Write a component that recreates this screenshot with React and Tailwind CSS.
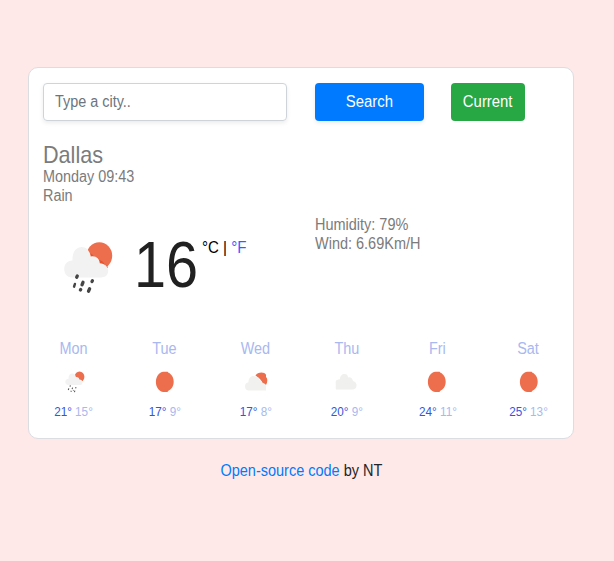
const RED = "#ec6e4c";
const CLOUD = "#f2f2f2";

function Sun({ className }) {
  return (
    <svg className={className} viewBox="0 0 20 22">
      <path d="M8.500.7h4.200l.4.900c3.300 1.300 5.600 5 5.600 9.200s-2.300 7.900-5.600 9.200l-.6 1H8.500C4 20.500.9 16 .9 10.900S4 1.200 8.500.7z" fill={RED} />
    </svg>
  );
}

function Cloud({ className }) {
  return (
    <svg className={className} viewBox="0 0 22 18">
      <path d="M2 16.500C1 16.500.7 16 .7 15V8.500C1 7.200 2.500 6.400 5 6.300 5 3 7 1 9.500 1c2.200 0 3.200 1.200 3.700 3.400 2.500-.6 4.300.9 4.800 3.600 2.500.7 3.700 2.300 3.500 5-.2 2.300-1.700 3.500-4 3.500z" fill="#f0f0ee" />
    </svg>
  );
}

function BrokenClouds({ className }) {
  return (
    <svg className={className} viewBox="0 0 24 20">
      <path d="M11.500 3.500C12.500 1.500 15 .500 17.500.500c2 0 3.800.8 4.500 2.200v2.300c1 .8 1.300 2 1.300 3.500 0 1.500-.4 2.800-1.200 4.200h-1.800L18 10l-2-3z" fill={RED} />
      <path d="M5 18.500c-2.500 0-4-1.500-4-4C1 12 2.300 10.500 4.500 10.200 4.500 6.500 6.500 4 9.500 4c.8 0 1.500.200 2.200.6 1.500 0 3.500.800 3.700 3.400 1.600.3 2.500 1 2.800 2.900 2.500.3 3.800 1.300 3.800 3.100v4.500z" fill="#f1f1ef" />
    </svg>
  );
}

function Shower({ className }) {
  return (
    <svg className={className} viewBox="0 0 20 22">
      <ellipse cx="14.500" cy="5.800" rx="4.900" ry="5.300" fill={RED} />
      <path d="M3.500 14C1.700 14 .3 12.900.3 11S1.600 7.900 3.500 7.800C3.500 4.500 5 2.600 7.200 2.600c2 0 3.300 1.200 3.700 3.400 1.900-.3 3.300.700 3.500 2.600 1.900.100 3.100 1.200 3.100 2.800 0 1.700-1.300 2.600-2.900 2.600z" fill={CLOUD} />
      <g stroke="#555" strokeWidth="1.100">
        <path d="M5.400 14.400l-.4 1.200M3.800 17.300l-.5 1.700M7.600 16.600l-.5 1.600M6.300 19.800l-.4 1M11 16.200l-.4 1.200M9.900 19.600l-.5 1.500M8.500 19l-.2.700" />
      </g>
    </svg>
  );
}

function RainCloud({ className }) {
  return (
    <svg className={className} viewBox="0 0 50 52">
      <ellipse cx="35.300" cy="13.700" rx="12.900" ry="13.500" fill={RED} />
      <path d="M22 13.500c1.500-3 7.500-3 9.300 4.300 5-.8 9 1.700 9.500 5.700 1.500.3 2.500.600 3.400 1.400L36 33 20 26z" fill="#e5532f" />
      <path d="M8 35.500C3 35.500.200 31.500.200 27c0-5 3.300-8.500 8.300-8.500C8 10.500 12 5 17.500 5c4.500 0 8.300 3.500 9.300 9.500 4.600-1.300 8.700 1.800 9 6.800 5 .2 8.400 3.400 8.400 7.500 0 4.200-3 6.700-7 6.700z" fill={CLOUD} />
      <g stroke="#454545" strokeWidth="3.300" strokeLinecap="round">
        <path d="M13.300 33.900l-.6 1.300" />
        <path d="M19 40.300l-1 2.500" />
        <path d="M28.400 38.800l-.4.700" />
        <path d="M16.700 47.600l-.3.400" />
        <path d="M25.600 46.800l-1.100 2.400" />
        <path d="M10.900 42l-.8 2.600" strokeWidth="2.500" />
      </g>
    </svg>
  );
}

function Narrow({ className = "", children }) {
  return <span className={`inline-block whitespace-nowrap ${className}`}>{children}</span>;
}

const days = [
  { name: "Mon", max: "21°", min: "15°", icon: <Shower className="ml-[3px] h-[22px] w-5" /> },
  { name: "Tue", max: "17°", min: "9°", icon: <Sun className="h-[22px] w-5" /> },
  { name: "Wed", max: "17°", min: "8°", icon: <BrokenClouds className="h-5 w-6" /> },
  { name: "Thu", max: "20°", min: "9°", icon: <Cloud className="mr-[2px] h-[18px] w-[22px]" /> },
  { name: "Fri", max: "24°", min: "11°", icon: <Sun className="mr-px h-[22px] w-5" /> },
  { name: "Sat", max: "25°", min: "13°", icon: <Sun className="h-[22px] w-5" /> },
];

export default function App() {
  return (
    <div className="flex h-[561px] flex-col items-center overflow-hidden bg-[#ffe8e8] pt-[67px] font-['Liberation_Sans',Arial,sans-serif] text-base leading-[19px] text-[#212529]">
      <main className="mr-3 flex h-[372px] w-[546px] flex-col rounded-[10px] border border-[#dadde2] bg-white text-[#7b7b7b]">
        <form className="flex h-[53px] items-end pl-[14px]">
          <div className="flex h-[38px] w-[244px] items-center rounded border border-[#ced4da] pb-0.5 pl-[11px] shadow-[0_2px_4px_rgba(0,0,0,0.08)]">
            <Narrow className="origin-left scale-x-90 text-[#6c757d]">Type a city..</Narrow>
          </div>
          <button type="button" className="ml-7 h-[38px] w-[109px] rounded bg-[#007bff] pb-0.5 text-white shadow-[0_2px_4px_rgba(0,0,0,0.08)]">
            <Narrow className="scale-x-[0.93]">Search</Narrow>
          </button>
          <button type="button" className="ml-[27px] h-[38px] w-[74px] rounded bg-[#28a745] pb-0.5 text-white">
            <Narrow className="scale-x-[0.93]">Current</Narrow>
          </button>
        </form>

        <header className="mt-[20px] flex flex-col items-start pl-[14px]">
          <h1 className="h-[26px] text-2xl leading-7">
            <Narrow className="origin-left scale-x-90">Dallas</Narrow>
          </h1>
          <Narrow className="origin-left scale-x-90">Monday 09:43</Narrow>
          <Narrow className="origin-left scale-x-90">Rain</Narrow>
        </header>

        <section className="mt-[10px] flex h-[121px] items-start">
          <div className="flex w-[286px] items-start pl-[35px] pt-[27px]">
            <RainCloud className="h-[52px] w-[50px]" />
            <div className="-mt-[13px] ml-[20px] w-[68px] text-[64px] leading-[72px] text-[#212121]">
              <Narrow className="origin-left scale-x-90">16</Narrow>
            </div>
            <div className="-mt-1 text-black">
              <Narrow className="origin-left scale-x-[0.94]">
                °C | <a className="text-[#3b5bff]">°F</a>
              </Narrow>
            </div>
          </div>
          <div className="flex flex-col items-start">
            <Narrow className="origin-left scale-x-[0.905]">Humidity: 79%</Narrow>
            <Narrow className="origin-left scale-x-[0.905]">Wind: 6.69Km/H</Narrow>
          </div>
        </section>

        <section className="-mx-px grid grid-cols-6 pt-[3px] text-[#a9b8f0]">
          {days.map((day) => (
            <div key={day.name} className="flex flex-col items-center">
              <Narrow className="scale-x-90">{day.name}</Narrow>
              <div className="mt-[9px] flex h-[30px] items-center">{day.icon}</div>
              <div className="mt-[5px] text-[13px] leading-5">
                <Narrow className="scale-x-90">
                  <span className="text-[#3156e0]">{day.max}</span> {day.min}
                </Narrow>
              </div>
            </div>
          ))}
        </section>
      </main>

      <footer className="mr-3 mt-[22px]">
        <Narrow className="scale-x-[0.905]">
          <a className="text-[#007bff]">Open-source code</a> by NT
        </Narrow>
      </footer>
    </div>
  );
}
